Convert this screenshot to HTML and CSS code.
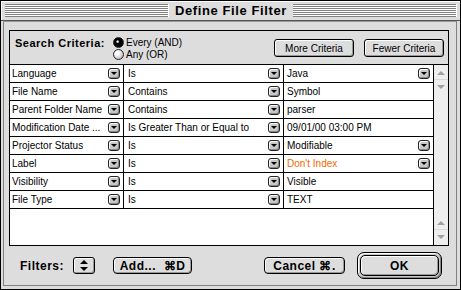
FILE: index.html
```html
<!DOCTYPE html>
<html>
<head>
<meta charset="utf-8">
<link rel="stylesheet" href="styles.css">
</head>
<body>
<div class="window">
  <div class="titlebar">
    <div class="stripes"></div>
    <div class="title">Define File Filter</div>
    <div class="stripes"></div>
  </div>
  <div class="content">
    <div class="panel">
      <div class="criteria">
        <div class="crit-label">Search Criteria:</div>
        <div class="radios">
          <div class="radio"><span class="dot on"></span>Every (AND)</div>
          <div class="radio"><span class="dot"></span>Any (OR)</div>
        </div>
        <div class="crit-buttons">
          <div class="btn small">More Criteria</div>
          <div class="btn small">Fewer Criteria</div>
        </div>
      </div>
      <div class="listarea">
        <div class="table">
          <div class="row">
            <div class="cell c1"><span>Language</span><i class="pop"></i></div>
            <div class="cell c2"><span>Is</span><i class="pop"></i></div>
            <div class="cell c3"><span>Java</span><i class="pop"></i></div>
          </div>
          <div class="row">
            <div class="cell c1"><span>File Name</span><i class="pop"></i></div>
            <div class="cell c2"><span>Contains</span><i class="pop"></i></div>
            <div class="cell c3"><span>Symbol</span></div>
          </div>
          <div class="row">
            <div class="cell c1"><span>Parent Folder Name</span><i class="pop"></i></div>
            <div class="cell c2"><span>Contains</span><i class="pop"></i></div>
            <div class="cell c3"><span>parser</span></div>
          </div>
          <div class="row">
            <div class="cell c1"><span>Modification Date ...</span><i class="pop"></i></div>
            <div class="cell c2"><span>Is Greater Than or Equal to</span><i class="pop"></i></div>
            <div class="cell c3"><span>09/01/00 03:00 PM</span></div>
          </div>
          <div class="row">
            <div class="cell c1"><span>Projector Status</span><i class="pop"></i></div>
            <div class="cell c2"><span>Is</span><i class="pop"></i></div>
            <div class="cell c3"><span>Modifiable</span><i class="pop"></i></div>
          </div>
          <div class="row">
            <div class="cell c1"><span>Label</span><i class="pop"></i></div>
            <div class="cell c2"><span>Is</span><i class="pop"></i></div>
            <div class="cell c3"><span class="orange">Don't Index</span><i class="pop"></i></div>
          </div>
          <div class="row">
            <div class="cell c1"><span>Visibility</span><i class="pop"></i></div>
            <div class="cell c2"><span>Is</span><i class="pop"></i></div>
            <div class="cell c3"><span>Visible</span></div>
          </div>
          <div class="row">
            <div class="cell c1"><span>File Type</span><i class="pop"></i></div>
            <div class="cell c2"><span>Is</span><i class="pop"></i></div>
            <div class="cell c3"><span>TEXT</span></div>
          </div>
        </div>
        <div class="scrollbar">
          <div class="arrows">
            <div class="arrow up"></div>
            <div class="arrow down"></div>
          </div>
          <div class="arrows">
            <div class="arrow up"></div>
            <div class="arrow down"></div>
          </div>
        </div>
      </div>
    </div>
    <div class="bottombar">
      <div class="filters-label">Filters:</div>
      <div class="btn stepper">
        <svg width="8" height="11" viewBox="0 0 8 11"><path d="M4 0 L8 4 L0 4 Z M0 7 L8 7 L4 11 Z" fill="#000"/></svg>
      </div>
      <div class="btn big add">Add...&nbsp;&nbsp;⌘D</div>
      <div class="btn big cancel">Cancel ⌘.</div>
      <div class="okring"><div class="btn big ok">OK</div></div>
    </div>
  </div>
</div>
</body>
</html>
```
FILE: styles.css
```css
* { box-sizing: border-box; }
body { margin: 0; background: #fff; font-family: "Liberation Sans", Arial, sans-serif; color: #000; }

.window {
  width: 461px; height: 290px;
  border: 1px solid #000;
  background: #dddddd;
  display: flex; flex-direction: column;
}

.titlebar {
  height: 20px; flex: none;
  display: flex; align-items: center;
  padding: 0 3px 0 4px;
  border-bottom: 1px solid #555;
  background: #dddddd;
  box-shadow: inset 1px 1px 0 #fff;
}
.stripes {
  flex: 1; height: 13px;
  background: repeating-linear-gradient(to bottom, #808080 0 1px, #ffffff 1px 2px);
  border-right: 1px solid #fff;
}
.title {
  font-weight: bold; font-size: 13px; letter-spacing: 0.6px;
  padding: 0 6px; line-height: 16px;
}

.content {
  flex: 1;
  margin: 0 3px 3px 2px;
  border: 1px solid #808080;
  border-top-color: #999;
  display: flex; flex-direction: column;
  padding: 8px 7px 0 5px;
}

.panel {
  border: 1px solid #000;
  height: 216px; flex: none;
  display: flex; flex-direction: column;
}

.criteria {
  height: 34px; flex: none;
  border-bottom: 1px solid #000;
  display: flex; align-items: flex-start;
  padding: 5px 4px 0 5px;
  background: #dddddd;
}
.crit-label {
  width: 98px; font-weight: bold; font-size: 11px; letter-spacing: 0.5px;
  line-height: 12px; margin-top: 1px;
}
.radios { display: flex; flex-direction: column; font-size: 10px; }
.radio { display: flex; align-items: center; height: 12px; gap: 2px; }
.dot {
  width: 11px; height: 11px; border-radius: 50%;
  border: 1px solid #222;
  background: radial-gradient(circle at 35% 35%, #fff 0 20%, #d0d0d0 60%, #999 100%);
}
.dot.on {
  background: radial-gradient(circle at 40% 40%, #fff 0 8%, #000 22%, #000 100%);
}
.crit-buttons { margin-left: auto; display: flex; gap: 10px; margin-top: 3px; }

.btn {
  display: flex; align-items: center; justify-content: center;
  border: 1px solid #000;
  background: #dddddd;
  box-shadow: inset 1px 1px 0 #fff, inset -1px -1px 0 #999;
}
.btn.small { width: 80px; height: 18px; border-radius: 3px; font-size: 10px; }

.listarea { flex: 1; display: flex; }
.table { flex: 1; background: #fff; }
.row {
  display: grid; grid-template-columns: 114px 160px 1fr;
  height: 18px; border-bottom: 1px solid #000;
}
.cell {
  display: flex; align-items: center; justify-content: space-between;
  font-size: 10px; padding: 0 3px 0 2px;
  border-right: 1px solid #000;
  white-space: nowrap; overflow: hidden;
}
.cell.c2 { padding-left: 4px; }
.cell.c3 { padding-left: 3px; border-right: none; padding-right: 3px; }
.orange { color: #f26800; }

.pop {
  flex: none; position: relative;
  width: 12px; height: 11px;
  border: 1px solid #222; border-radius: 3px;
  background: #c8c8c8;
  box-shadow: inset 1px 1px 0 #fff, inset -1px -1px 0 #888;
}
.pop::after {
  content: ""; position: absolute; left: 2px; top: 3px;
  border-left: 3px solid transparent; border-right: 3px solid transparent;
  border-top: 3px solid #000;
}

.scrollbar {
  width: 15px; flex: none;
  border-left: 1px solid #000;
  background: #eeeeee;
  display: flex; flex-direction: column; justify-content: space-between;
}
.arrows { display: flex; flex-direction: column; }
.arrow { height: 15px; position: relative; }
.arrow.up { border-bottom: 1px solid #d8d8d8; }
.arrow::after {
  content: ""; position: absolute; left: 3px;
  border-left: 4px solid transparent; border-right: 4px solid transparent;
}
.arrow.up::after { top: 6px; border-bottom: 4px solid #a0a0a0; }
.arrow.down::after { top: 5px; border-top: 4px solid #a0a0a0; }

.bottombar {
  height: 39px; flex: none;
  display: flex; align-items: center;
  padding: 0 7px 0 11px;
}
.filters-label { font-weight: bold; font-size: 12px; letter-spacing: 0.5px; }
.stepper { width: 22px; height: 17px; border-radius: 3px; margin-left: 9px; }
.btn.big { height: 17px; border-radius: 4px; font-weight: bold; font-size: 12px; letter-spacing: 0.5px; }
.add { width: 79px; margin-left: 18px; }
.cancel { width: 81px; margin-left: auto; }
.okring {
  width: 85px; height: 27px; margin-left: 12px;
  border: 1px solid #000; border-radius: 7px;
  background: #c8c8c8;
  box-shadow: inset 1px 1px 0 #fff, inset -1px -1px 0 #888;
  padding: 2px;
}
.btn.ok { width: 100%; height: 100%; border-radius: 5px; }
```
